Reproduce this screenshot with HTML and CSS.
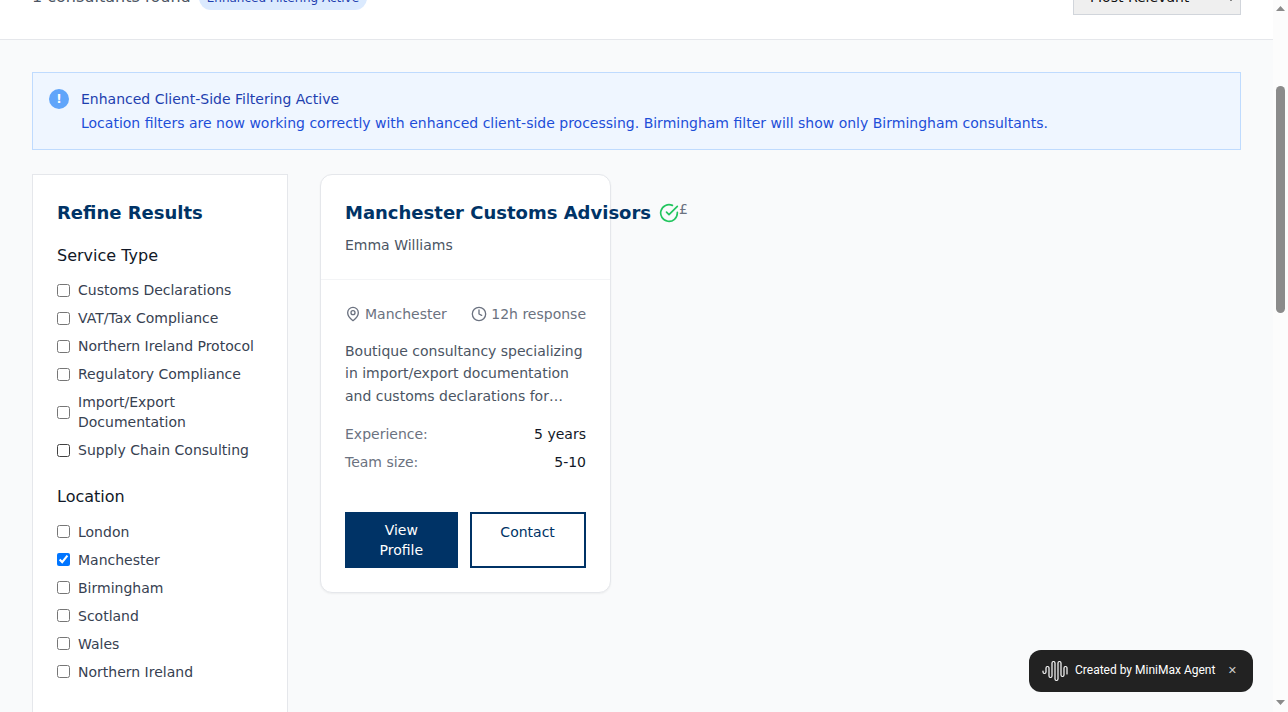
FILE: index.html
```html
<!DOCTYPE html>
<html lang="en">
<head>
<meta charset="utf-8">
<title>Consultants</title>
<link rel="stylesheet" href="styles.css">
</head>
<body>
<div class="page">
  <header class="toolbar">
    <div class="toolbar-row">
      <div class="summary"><span class="count">1 consultants found</span><span class="pill">Enhanced Filtering Active</span></div>
      <div class="sort"><span>Most Relevant</span><svg class="caret" viewBox="0 0 10 6"><path d="M1 1l4 4 4-4" fill="none" stroke="#111" stroke-width="1.5"/></svg></div>
    </div>
  </header>
  <main class="content">
    <section class="notice">
      <span class="notice-icon">!</span>
      <div class="notice-text"><h3>Enhanced Client-Side Filtering Active</h3><p>Location filters are now working correctly with enhanced client-side processing. Birmingham filter will show only Birmingham consultants.</p></div>
    </section>
    <div class="columns">
      <aside class="filters">
        <h2>Refine Results</h2>
        <h3>Service Type</h3>
        <div class="options">
          <label><input type="checkbox"><span>Customs Declarations</span></label>
          <label><input type="checkbox"><span>VAT/Tax Compliance</span></label>
          <label><input type="checkbox"><span>Northern Ireland Protocol</span></label>
          <label><input type="checkbox"><span>Regulatory Compliance</span></label>
          <label><input type="checkbox"><span>Import/Export Documentation</span></label>
          <label><input type="checkbox" class="hovered"><span>Supply Chain Consulting</span></label>
        </div>
        <h3>Location</h3>
        <div class="options">
          <label><input type="checkbox"><span>London</span></label>
          <label><input type="checkbox" checked><span>Manchester</span></label>
          <label><input type="checkbox"><span>Birmingham</span></label>
          <label><input type="checkbox"><span>Scotland</span></label>
          <label><input type="checkbox"><span>Wales</span></label>
          <label><input type="checkbox"><span>Northern Ireland</span></label>
        </div>
      </aside>
      <article class="card">
        <div class="card-head">
          <div class="card-title">
            <h2>Manchester Customs Advisors</h2>
            <svg class="verified" viewBox="0 0 24 24"><path d="M22 11.08V12a10 10 0 1 1-5.93-9.14"/><path d="m9 11 3 3L22 4"/></svg>
            <span class="price">£</span>
          </div>
          <p>Emma Williams</p>
        </div>
        <div class="card-body">
          <div class="meta">
            <span><svg viewBox="0 0 24 24"><path d="M20 10c0 6-8 12-8 12s-8-6-8-12a8 8 0 0 1 16 0Z"/><circle cx="12" cy="10" r="3"/></svg>Manchester</span>
            <span><svg viewBox="0 0 24 24"><circle cx="12" cy="12" r="10"/><path d="M12 6v6l4 2"/></svg>12h response</span>
          </div>
          <p class="about">Boutique consultancy specializing in import/export documentation and customs declarations for…</p>
          <dl><div><dt>Experience:</dt><dd>5 years</dd></div><div><dt>Team size:</dt><dd>5-10</dd></div></dl>
          <div class="actions"><a class="primary">View Profile</a><a class="outline">Contact</a></div>
        </div>
      </article>
    </div>
  </main>
</div>
<div class="scrollbar">
  <svg viewBox="0 0 15 712"><path d="M3 11h9L7.5 6zM3 700h9l-4.500 5z" fill="#8b8b8b"/><rect x="3" y="86" width="9" height="227" rx="4.500" fill="#8b8b8b"/></svg>
</div>
<div class="toast">
  <svg class="wave" viewBox="0 0 26 22"><path d="M1 11v1a1.500 1.500 0 0 0 3 0V8a1.500 1.500 0 0 1 3 0v8a1.500 1.500 0 0 0 3 0V3a1.500 1.500 0 0 1 3 0v16a1.500 1.500 0 0 0 3 0V3a1.500 1.500 0 0 1 3 0v12a1.500 1.500 0 0 0 3 0V8a1.500 1.500 0 0 1 3 0v6"/></svg>
  <span class="toast-text">Created by MiniMax Agent</span>
  <span class="close">✕</span>
</div>
</body>
</html>
```
FILE: styles.css
```css
* { box-sizing: border-box; }
body {
  margin: 0; width: 1288px; height: 712px; overflow: hidden;
  display: grid; grid-template-columns: 1273px 15px;
  background: #f9fafb; color: #111827;
  font: 14px/20px "DejaVu Sans", sans-serif;
}
h2, h3, p, dl, dd { margin: 0; font-weight: 400; }
.page { height: 712px; overflow: hidden; }
.toolbar {
  height: 40px; overflow: hidden; padding: 0 32px 24px;
  display: flex; align-items: flex-end;
  background: #fff; border-bottom: 1px solid #e5e7eb;
}
.toolbar-row { width: 100%; display: flex; justify-content: space-between; align-items: center; }
.summary { display: flex; align-items: baseline; gap: 8px; padding-top: 2px; }
.count { font-size: 16px; line-height: 24px; color: #4b5563; }
.pill { padding: 4px 8px; border-radius: 12px; background: #dbeafe; color: #1e40af; font-size: 12px; line-height: 16px; }
.sort {
  width: 168px; height: 37px; padding: 0 5px 0 16px;
  display: flex; align-items: center; justify-content: space-between;
  background: #efefef; border: 1px solid #d1d5db; color: #111;
}
.caret { width: 8px; height: 5px; margin-top: 4px; }
.content { padding: 32px; }
.notice {
  height: 78px; margin-bottom: 24px; padding: 16px;
  display: flex; gap: 12px; background: #eff6ff; border: 1px solid #bfdbfe;
}
.notice-icon {
  width: 20px; height: 20px; border-radius: 50%; background: #60a5fa; color: #fff;
  font-size: 12px; font-weight: 700; text-align: center;
}
.notice-text { display: grid; gap: 4px; align-content: start; color: #1d4ed8; }
.notice h3 { font-size: 14px; color: #1e40af; }
.columns { display: flex; gap: 32px; align-items: flex-start; }
.filters { width: 256px; height: 640px; padding: 24px; background: #fff; border: 1px solid #e5e7eb; }
.filters h2 { margin-bottom: 16px; font-size: 18px; line-height: 28px; font-weight: 700; color: #003366; }
.filters h3 { margin-bottom: 12px; font-size: 16px; line-height: 25.3px; }
.options { display: grid; gap: 8px; margin-bottom: 24px; }
.options label { display: flex; align-items: center; gap: 8px; color: #374151; }
.options input { flex: none; width: 13px; height: 13px; margin: 0; }
.options .hovered { filter: brightness(.65) contrast(1.6) brightness(1.4); }
.card {
  width: 291px; background: #fff; border: 1px solid #e5e7eb; border-radius: 12px;
  box-shadow: 0 1px 2px rgba(0, 0, 0, .05);
}
.card-head { height: 105px; padding: 24px; border-bottom: 1px solid #f3f4f6; }
.card-title { display: flex; align-items: center; white-space: nowrap; margin-bottom: 8px; }
.card h2 { font-size: 18px; line-height: 28px; font-weight: 700; color: #003366; }
.card-head p { line-height: 20px; color: #4b5563; }
svg { flex: none; }
.verified { width: 20px; height: 20px; margin-left: 8px; fill: none; stroke: #22c55e; stroke-width: 2; stroke-linecap: round; stroke-linejoin: round; }
.price { align-self: flex-start; font-size: 14px; line-height: 20px; color: #6b7280; }
.card-body { padding: 24px; }
.meta { display: flex; justify-content: space-between; margin-bottom: 15.6px; color: #6b7280; white-space: nowrap; }
.meta span { display: flex; align-items: center; gap: 4px; }
.meta svg { width: 16px; height: 16px; fill: none; stroke: currentColor; stroke-width: 2; stroke-linecap: round; stroke-linejoin: round; }
.about { margin-bottom: 16.4px; line-height: 22.75px; color: #4b5563; }
dl { display: grid; gap: 8px; margin-bottom: 39.75px; }
dl div { display: flex; justify-content: space-between; }
dt { color: #6b7280; }
.actions { display: flex; gap: 12px; text-align: center; }
.primary { width: 112.6px; height: 56px; padding: 8px 16px; background: #003366; color: #fff; }
.outline { width: 116px; height: 56px; padding: 8px 16px; border: 2px solid #003366; color: #003366; }
.scrollbar { height: 712px; background: #fcfcfc; }
.scrollbar svg { display: block; width: 15px; height: 712px; }
.toast {
  position: absolute; left: 1029px; top: 650px; width: 224px; height: 42px;
  padding: 0 16px 1px 13px; display: flex; align-items: center;
  background: #222; border-radius: 12px; color: #fff;
  font: 400 12px/16px Roboto, sans-serif;
}
.wave { width: 26px; height: 22px; fill: none; stroke: #fff; stroke-width: 1.2; stroke-linecap: round; }
.toast-text { margin: 0 0 1px 7px; white-space: nowrap; color: #fff; }
.close { margin-left: auto; font: 11px/16px "DejaVu Sans", sans-serif; color: #ccc; }
```
